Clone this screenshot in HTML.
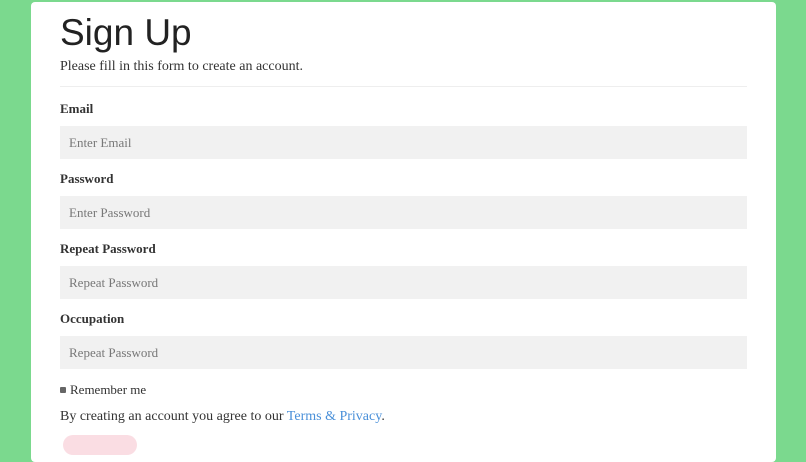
<!DOCTYPE html>
<html><head><style>
html,body{margin:0;padding:0;width:806px;height:441px;overflow:hidden;background:#7bd98e;}
.card{position:absolute;left:31px;top:2px;width:745px;height:460px;background:#fff;border-radius:4px;}
h1{position:absolute;left:29px;top:10px;margin:0;font:37px "Liberation Sans",sans-serif;color:#222;}
.t{font-family:"Liberation Serif",serif;color:#333;}
.lab{position:absolute;left:29px;font:bold 13px "Liberation Serif",serif;color:#333;}
.box{position:absolute;left:29px;width:687px;height:33px;background:#f1f1f1;font:13px "Liberation Serif",serif;color:#777;line-height:33px;text-indent:9px;}
hr{position:absolute;left:29px;top:84px;width:687px;margin:0;border:0;border-top:1px solid #eee;}
a{color:#4a90d9;text-decoration:none;}
</style></head><body>
<div class="card">
<h1>Sign Up</h1>
<div class="t" style="position:absolute;left:29px;top:57px;font-size:14px;">Please fill in this form to create an account.</div>
<hr>
<div class="lab" style="top:99px">Email</div>
<div class="box" style="top:124px">Enter Email</div>
<div class="lab" style="top:169px">Password</div>
<div class="box" style="top:194px">Enter Password</div>
<div class="lab" style="top:239px">Repeat Password</div>
<div class="box" style="top:264px">Repeat Password</div>
<div class="lab" style="top:309px">Occupation</div>
<div class="box" style="top:334px">Repeat Password</div>
<div style="position:absolute;left:29px;top:385px;width:6px;height:6px;background:#666;border-radius:1px;"></div>
<div class="t" style="position:absolute;left:39px;top:380px;font-size:13px;">Remember me</div>
<div class="t" style="position:absolute;left:29px;top:407px;font-size:14px;">By creating an account you agree to our <a>Terms &amp; Privacy</a>.</div>
<div style="position:absolute;left:32px;top:433px;width:74px;height:20px;background:#fadde3;border-radius:10px;"></div>
</div>
</body></html>
